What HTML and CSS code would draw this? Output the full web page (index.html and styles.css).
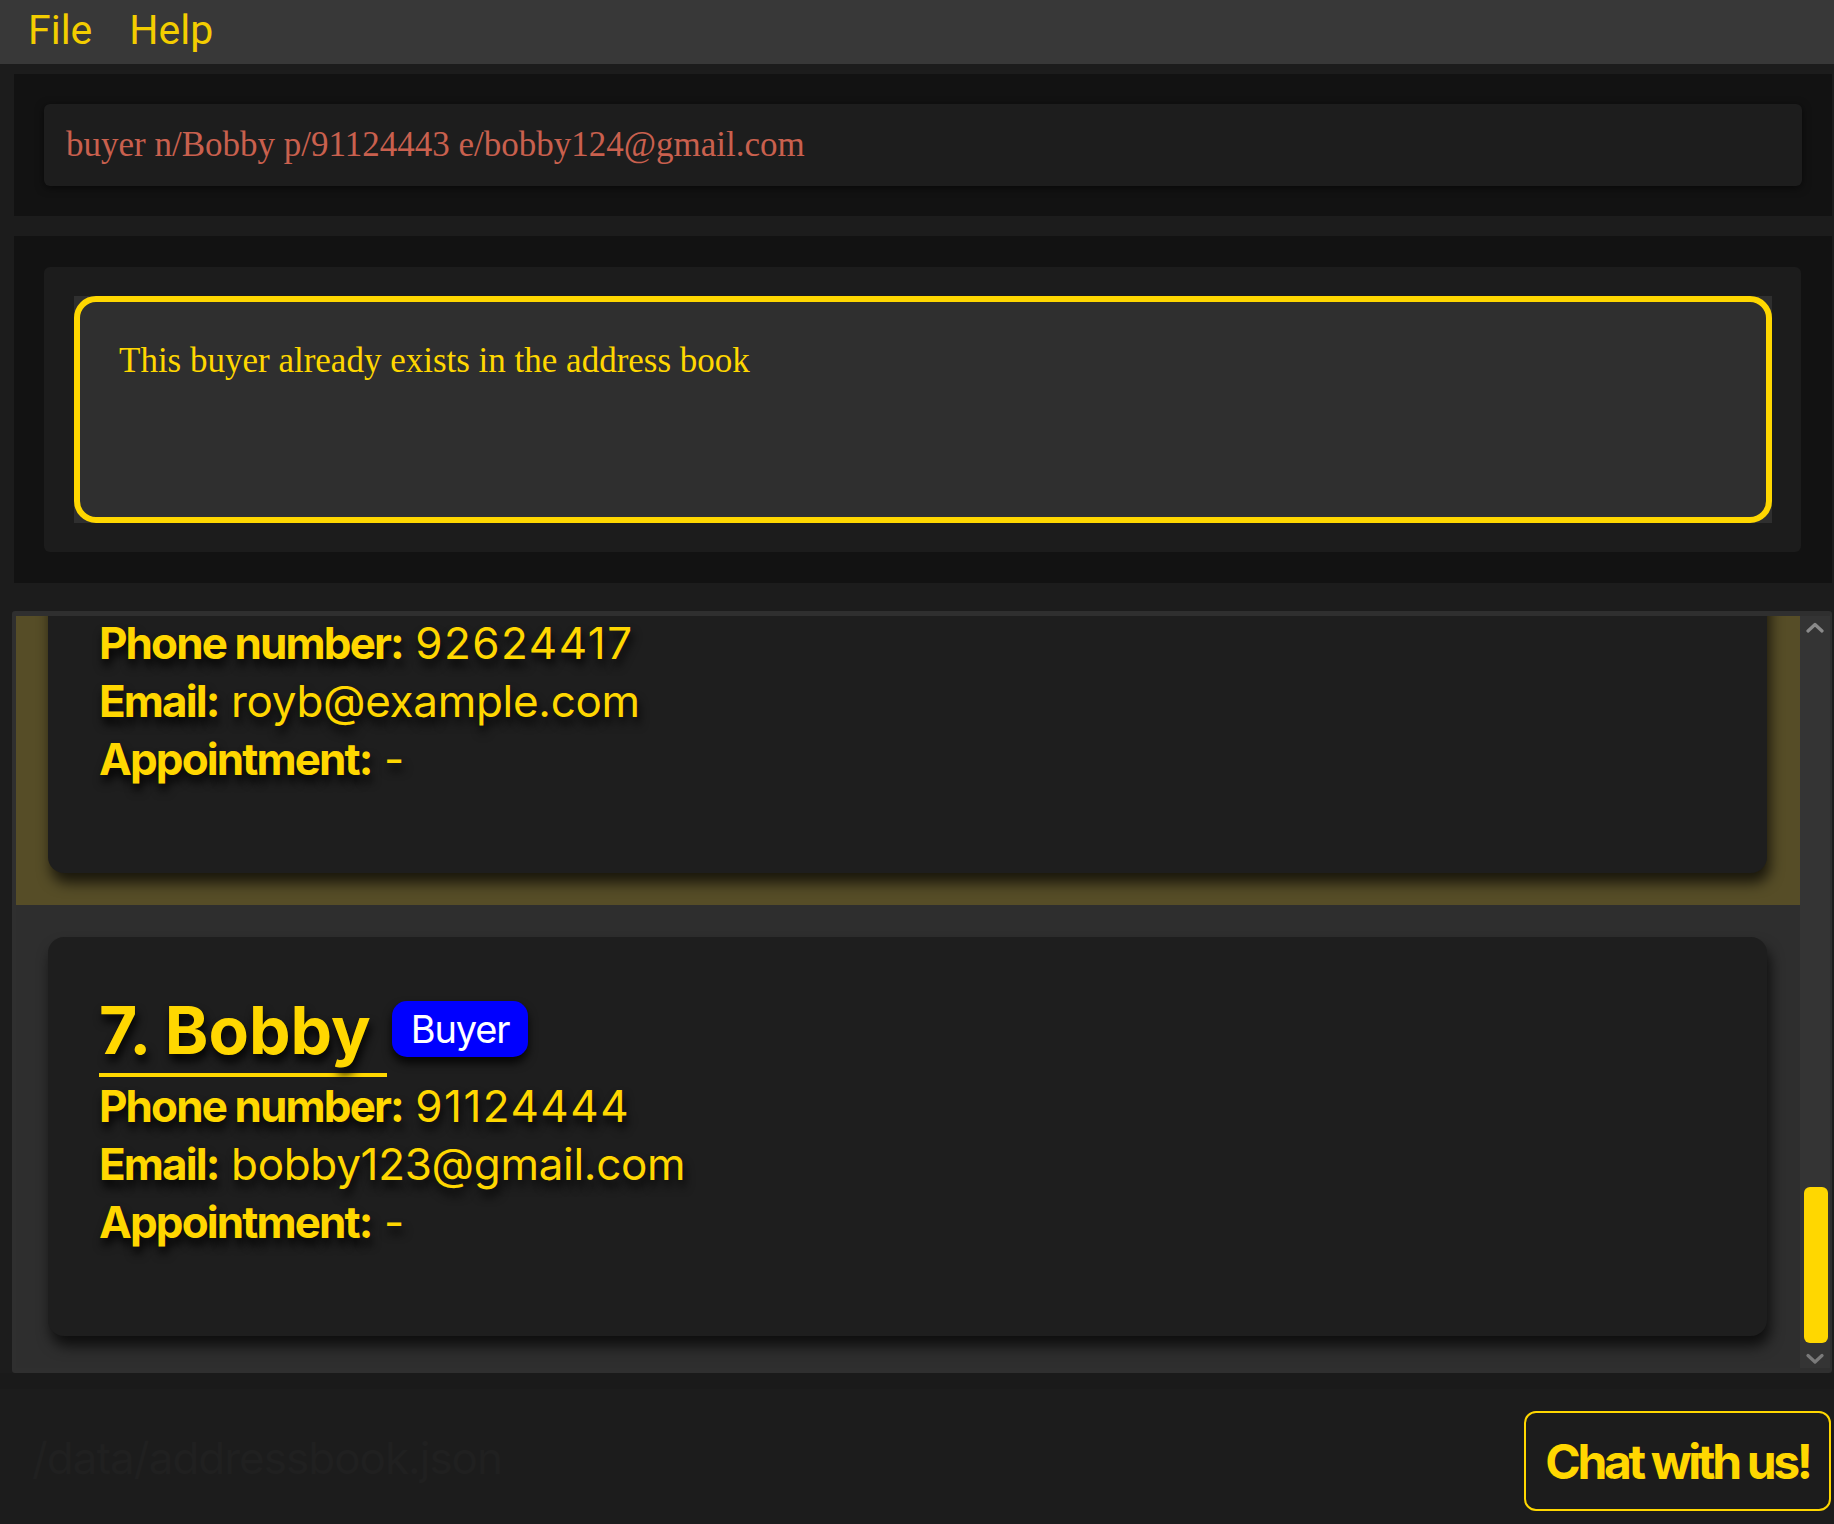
FILE: index.html
```html
<!DOCTYPE html>
<html>
<head>
<meta charset="utf-8">
<link rel="stylesheet" href="styles.css">
</head>
<body>
<div class="app">
  <div class="menubar">
    <span class="menu-item">File</span>
    <span class="menu-item">Help</span>
  </div>

  <div class="panel cmd-panel">
    <div class="cmd-field">buyer n/Bobby p/91124443 e/bobby124@gmail.com</div>
  </div>

  <div class="panel result-panel">
    <div class="result-box">
      <div class="result-area">
        <div class="result-inner">This buyer already exists in the address book</div>
      </div>
    </div>
  </div>

  <div class="list-panel">
    <div class="list-viewport">
      <div class="cell selected">
        <div class="card card-scrolled">
          <div class="info"><b>Phone number:</b> <span class="num">92624417</span></div>
          <div class="info"><b>Email:</b> <span class="mail">royb@example.com</span></div>
          <div class="info"><b>Appointment:</b> -</div>
        </div>
      </div>
      <div class="cell">
        <div class="card">
          <div class="name-row">
            <span class="name">7. Bobby</span>
            <span class="tag">Buyer</span>
          </div>
          <div class="info"><b>Phone number:</b> <span class="num">91124444</span></div>
          <div class="info"><b>Email:</b> <span class="mail">bobby123@gmail.com</span></div>
          <div class="info"><b>Appointment:</b> -</div>
        </div>
      </div>
    </div>
    <div class="scrollbar">
      <svg class="arrow up" width="18" height="11" viewBox="0 0 18 11"><path d="M2 9 L9 2.5 L16 9" fill="none" stroke="#8a8a8a" stroke-width="3.2" stroke-linecap="round" stroke-linejoin="round"/></svg>
      <div class="track"><div class="thumb"></div></div>
      <svg class="arrow down" width="18" height="12" viewBox="0 0 18 12"><path d="M2 2.5 L9 9 L16 2.5" fill="none" stroke="#7a7a7a" stroke-width="3.2" stroke-linecap="round" stroke-linejoin="round"/></svg>
    </div>
  </div>

  <div class="statusbar">
    <span class="status-path">/data/addressbook.json</span>
    <button class="chat-btn">Chat with us!</button>
  </div>
</div>
</body>
</html>
```

FILE: styles.css
```css
html, body {
  margin: 0;
  padding: 0;
  background: #1c1c1c;
}

.app {
  width: 1834px;
  height: 1524px;
  display: flex;
  flex-direction: column;
  overflow: hidden;
  font-family: "Inter", "Noto Sans", sans-serif;
}

/* menu */
.menubar {
  height: 64px;
  flex: none;
  background: #383838;
  display: flex;
  align-items: center;
  padding-left: 28px;
  gap: 37px;
  box-sizing: border-box;
}

.menu-item {
  font-family: "Roboto", "Liberation Sans", sans-serif;
  font-size: 41px;
  color: #f3cd00;
  line-height: 1;
  margin-top: -4px;
}

/* panels */
.panel {
  flex: none;
  background: #121212;
  margin-left: 14px;
  margin-right: 2px;
  box-sizing: border-box;
  padding: 30px;
}

.cmd-panel {
  margin-top: 10px;
  height: 142px;
}

.cmd-field {
  height: 82px;
  background: #1d1d1d;
  border-radius: 6px;
  box-shadow: 0 2px 8px rgba(0, 0, 0, 0.55);
  display: flex;
  align-items: center;
  padding-left: 22px;
  font-family: "Liberation Serif", "DejaVu Serif", serif;
  font-size: 35px;
  color: #c9604e;
  white-space: nowrap;
}

.result-panel {
  margin-top: 20px;
  height: 347px;
  padding: 31px 31px 31px 30px;
}

.result-box {
  height: 285px;
  background: #1c1c1c;
  border-radius: 6px;
  box-sizing: border-box;
  padding: 29px 29px 29px 30px;
}

.result-area {
  height: 227px;
  background: #2f2f2f;
}

.result-inner {
  height: 100%;
  box-sizing: border-box;
  border: 6px solid #ffd700;
  border-radius: 22px;
  padding: 39px 39px;
  font-family: "Liberation Serif", "DejaVu Serif", serif;
  font-size: 35px;
  color: #ffd700;
}

/* list */
.list-panel {
  flex: none;
  margin-top: 28px;
  margin-left: 12px;
  margin-right: 2px;
  height: 762px;
  box-sizing: border-box;
  border-style: solid;
  border-color: #2f2f2f;
  border-width: 5px 2px 5px 4px;
  border-radius: 3px;
  background: #2e2e2e;
  display: flex;
}

.list-viewport {
  flex: 1;
  overflow: hidden;
  display: flex;
  flex-direction: column;
  justify-content: flex-end;
}

.cell {
  flex: none;
  padding: 32px 33px 32px 32px;
  background: #2e2e2e;
}

.cell.selected {
  background: #564d27;
}

.card {
  height: 399px;
  box-sizing: border-box;
  background: #1e1e1e;
  border-radius: 16px;
  box-shadow: 3px 10px 14px rgba(0, 0, 0, 0.7);
  padding: 53px 51px 0 51px;
  color: #ffd700;
  text-shadow: 2px 7px 10px rgba(0, 0, 0, 0.95);
}

.card-scrolled {
  padding-top: 140px;
}

.name-row {
  display: flex;
  align-items: center;
  gap: 5px;
}

.name {
  font-size: 66px;
  font-weight: 700;
  letter-spacing: 0;
  line-height: 80px;
  padding-right: 16px;
  padding-bottom: 3px;
  border-bottom: 4px solid #ffd700;
  white-space: nowrap;
}

.tag {
  background: #0000ff;
  color: #ffffff;
  font-size: 38px;
  letter-spacing: -0.03em;
  height: 56px;
  line-height: 56px;
  padding: 0 19px;
  margin-bottom: 10px;
  border-radius: 15px;
  box-shadow: 0 6px 10px rgba(0, 0, 0, 0.85);
  text-shadow: none;
  white-space: nowrap;
}

.info {
  font-size: 44px;
  line-height: 58px;
  white-space: nowrap;
}

.info b {
  font-weight: 700;
  letter-spacing: -0.043em;
}

.num {
  letter-spacing: 1.5px;
}

.mail {
  letter-spacing: -0.3px;
}

/* scrollbar */
.scrollbar {
  flex: none;
  width: 30px;
  background: #343434;
  display: flex;
  flex-direction: column;
  align-items: center;
  padding-top: 6px;
  padding-bottom: 3px;
  box-sizing: border-box;
}

.arrow {
  flex: none;
  display: block;
}

.track {
  flex: 1;
  width: 100%;
  display: flex;
  flex-direction: column;
  justify-content: flex-end;
  align-items: center;
  padding-bottom: 10px;
  padding-left: 2px;
  box-sizing: border-box;
}

.thumb {
  width: 24px;
  height: 156px;
  background: #ffd700;
  border-radius: 6px;
}

/* status bar */
.statusbar {
  flex: 1;
  display: flex;
  justify-content: space-between;
  align-items: flex-start;
  padding: 38px 3px 0 32px;
  box-sizing: border-box;
  background: linear-gradient(#1a1a1a 0, #1a1a1a 16px, #1c1c1c 16px);
}

.status-path {
  font-size: 44px;
  letter-spacing: -1px;
  color: #202020;
  margin-top: 20px;
}

.chat-btn {
  width: 307px;
  height: 100px;
  box-sizing: border-box;
  background: #1c1c1c;
  border: 2px solid #ffd700;
  border-radius: 12px;
  font-family: "Inter", "Noto Sans", sans-serif;
  font-size: 48px;
  font-weight: 700;
  letter-spacing: -0.07em;
  color: #ffd700;
  padding: 0;
}
```
